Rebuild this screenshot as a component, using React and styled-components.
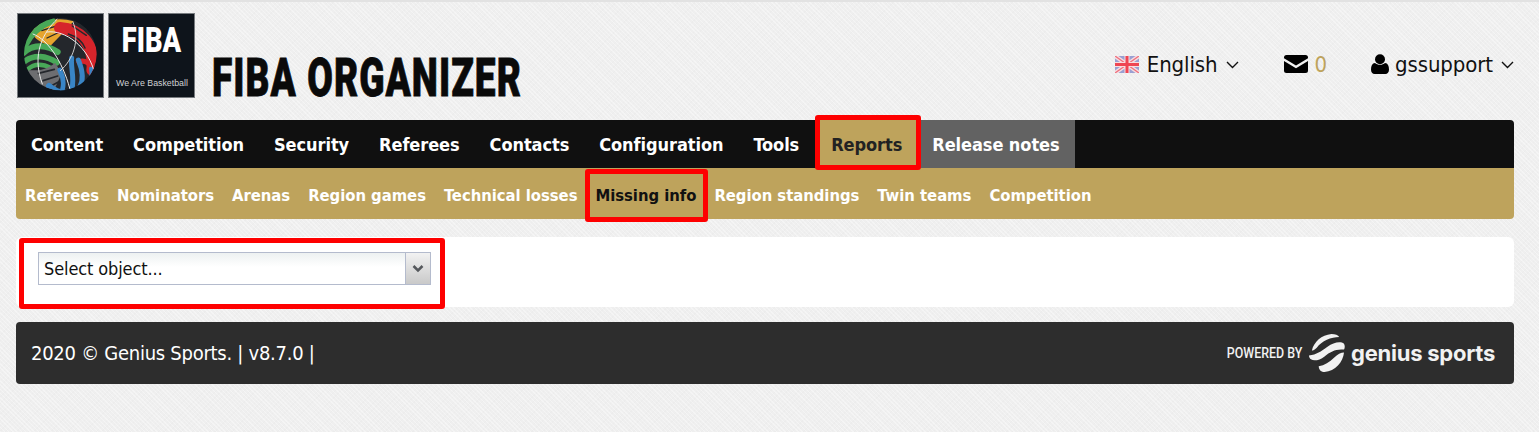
import React from "react";
import styled, { createGlobalStyle, css } from "styled-components";

const Global = createGlobalStyle`
  html, body { margin: 0; padding: 0; }
  body {
    height: 432px;
    overflow: hidden;
    background-color: #efefef;
    background-image:
      repeating-linear-gradient(45deg, rgba(255,255,255,.35) 0 1px, transparent 1px 3px),
      repeating-linear-gradient(-45deg, rgba(0,0,0,.012) 0 1px, transparent 1px 4px);
    font-family: "DejaVu Sans Condensed", "DejaVu Sans", sans-serif;
  }
`;

const redFrame = (top, right, bottom, left) => css`
  position: relative;
  &::after {
    content: "";
    position: absolute;
    z-index: 2;
    top: ${top}px;
    right: ${right}px;
    bottom: ${bottom}px;
    left: ${left}px;
    border: 5px solid #fe0000;
    border-radius: 3px;
    pointer-events: none;
  }
`;

const Page = styled.div`
  box-sizing: border-box;
  width: 1539px;
  height: 432px;
  padding: 0 25px 0 16px;
  border-top: 2px solid #e2e2e2;
`;

const Header = styled.header`
  height: 118px;
  display: flex;
  justify-content: space-between;
`;

const Brand = styled.div`
  display: flex;
  align-items: flex-start;
  padding: 11px 0 0 1px;
`;

const Tile = styled.svg`
  display: block;
  width: 87px;
  height: 85px;
  margin-right: 4px;
`;

const Title = styled.h1`
  margin: 43px 0 0 13px;
  font-family: "Roboto", "Liberation Sans", sans-serif;
  font-weight: 900;
  font-size: 53px;
  line-height: 44px;
  color: #0a0a0a;
  -webkit-text-stroke: 0.8px #0a0a0a;
  transform: scaleX(0.7);
  transform-origin: left center;
  white-space: nowrap;
  letter-spacing: 1.500px;
`;

const UserBar = styled.div`
  display: flex;
  align-items: center;
  height: 124px;
  color: #111;
  font-size: 22px;
  letter-spacing: -0.1px;
`;

const UserItem = styled.div`
  display: flex;
  align-items: center;
  margin-left: ${(p) => p.$gap}px;
`;

const Count = styled.span`
  color: #bea35c;
  margin-left: 7px;
`;

const Caret = styled.svg`
  width: 13px;
  height: 8px;
  margin-left: 8px;
  margin-top: 2px;
`;

const Nav = styled.nav`
  display: flex;
  height: 48px;
  background: #101010;
  border-radius: 4px 4px 0 0;
`;

const NavItem = styled.a`
  display: flex;
  align-items: center;
  height: 100%;
  padding: 0 ${(p) => p.$trail ?? 15}px 0 15px;
  font-size: 18px;
  font-weight: 700;
  letter-spacing: -0.07px;
  color: ${(p) => (p.$active ? "#222" : "#fff")};
  background: ${(p) => (p.$active ? "#bea35c" : p.$muted ? "#626262" : "transparent")};
  ${(p) => p.$active && redFrame(-5, -4, -2, -1)}
`;

const SubNav = styled.nav`
  display: flex;
  align-items: stretch;
  height: 51px;
  background: #bea35c;
  border-radius: 0 0 4px 4px;
`;

const SubItem = styled.a`
  display: flex;
  align-items: center;
  padding: 3px 9px 0;
  font-size: 16.500px;
  font-weight: 700;
  letter-spacing: -0.03px;
  color: ${(p) => (p.$active ? "#111" : "#fff")};
  ${(p) => p.$active && redFrame(1, -3, -3, -1)}
`;

const Panel = styled.section`
  margin-top: 18px;
  height: 70px;
  box-sizing: border-box;
  background: #fff;
  border-radius: 6px;
  padding: 15px 0 0 22px;
`;

const Annotated = styled.div`
  width: 393px;
  height: 33px;
  ${redFrame(-14, -14, -24, -19)}
`;

const SelectBox = styled.div`
  box-sizing: border-box;
  width: 393px;
  height: 33px;
  display: flex;
  border: 1px solid #b4bbcd;
  background: linear-gradient(#edf1f1, #fff 45%);
`;

const SelectText = styled.span`
  flex: 1;
  padding-left: 5px;
  font-size: 18px;
  letter-spacing: -0.12px;
  line-height: 32px;
  color: #111;
`;

const SelectButton = styled.span`
  width: 24px;
  display: flex;
  align-items: center;
  justify-content: center;
  border-left: 1px solid #b4bbcd;
  background: linear-gradient(#f2f2f2, #c9c9c9);
`;

const Footer = styled.footer`
  margin-top: 15px;
  height: 62px;
  display: flex;
  align-items: center;
  justify-content: space-between;
  padding: 0 19px 0 15px;
  background: #2d2d2d;
  border-radius: 4px;
  color: #fff;
  font-size: 20px;
  letter-spacing: -0.27px;
`;

const Powered = styled.div`
  display: flex;
  align-items: center;
  letter-spacing: 0;
`;

const PoweredBy = styled.span`
  font-family: "Roboto", sans-serif;
  font-size: 15.500px;
  font-weight: 500;
  color: #f2f2f2;
  transform: scaleX(0.8);
  transform-origin: right center;
  white-space: nowrap;
`;

const GeniusWord = styled.span`
  font-family: "Inter", sans-serif;
  font-size: 22px;
  font-weight: 700;
  color: #f2f2f2;
  letter-spacing: -0.25px;
  margin-left: 6px;
  white-space: nowrap;
`;

const Ball = () => (
  <Tile viewBox="6 9 261 255">
    <rect x="7.500" y="10.500" width="258" height="252" fill="#0e141b" stroke="#777b7f" strokeWidth="3" />
    <clipPath id="ballclip"><circle cx="136" cy="132" r="109" /></clipPath>
    <g clipPath="url(#ballclip)" fill="none" strokeLinecap="round">
      <circle cx="136" cy="132" r="109" fill="#24272c" />
      <path d="M48 66C72 34 125 18 176 34L150 62 106 108C80 100 58 86 48 66Z" fill="#e6a42e" />
      <path d="M80 62L130 46M96 84L134 66" stroke="#24272c" strokeWidth="4" />
      <path d="M135 54C194 58 240 100 232 180" stroke="#d6242b" strokeWidth="36" />
      <path d="M160 72C186 80 202 94 210 114M172 48L214 76" stroke="#24272c" strokeWidth="4.500" />
      <path d="M192 156C210 148 226 160 234 178" stroke="#d6242b" strokeWidth="16" />
      <path d="M30 104C46 72 74 46 110 32" stroke="#48a858" strokeWidth="22" />
      <path d="M24 130C56 98 100 106 128 126" stroke="#48a858" strokeWidth="18" />
      <path d="M24 158C56 130 96 138 126 158" stroke="#48a858" strokeWidth="17" />
      <path d="M38 178C58 160 84 162 108 174" stroke="#48a858" strokeWidth="13" />
      <path d="M32 180C56 182 92 184 120 158L140 190 114 248C78 236 46 212 32 180Z" fill="#6d6e71" />
      <path d="M70 190L118 178M84 212L128 198M104 230L130 216" stroke="#24272c" strokeWidth="5" />
      <path d="M102 228C130 254 176 256 210 236" stroke="#3985c6" strokeWidth="18" />
      <path d="M142 240C148 218 144 198 134 180" stroke="#3985c6" strokeWidth="14" />
      <path d="M170 240C180 206 166 172 170 144" stroke="#3985c6" strokeWidth="15" />
      <path d="M194 232C210 204 200 174 190 150" stroke="#3985c6" strokeWidth="15" />
      <path d="M218 218C228 206 232 192 228 176" stroke="#3985c6" strokeWidth="12" />
      <path d="M126 28C86 66 48 130 82 222" stroke="#ececec" strokeWidth="3" />
      <path d="M54 72C104 90 150 170 168 250" stroke="#ececec" strokeWidth="3" />
      <path d="M96 66C150 58 222 110 240 194" stroke="#ececec" strokeWidth="3" />
      <path d="M174 36C196 90 174 150 136 182" stroke="#ececec" strokeWidth="2.500" />
    </g>
  </Tile>
);

const FibaTile = () => (
  <Tile viewBox="0 0 87 85">
    <rect x=".5" y=".5" width="86" height="84" fill="#0e141b" stroke="#777b7f" />
    <text transform="translate(43.500 39) scale(.78 1)" textAnchor="middle" fontFamily="Roboto" fontWeight="900" fontSize="35" fill="#fff">FIBA</text>
    <text transform="translate(44 73) scale(.93 1)" textAnchor="middle" fontFamily="Liberation Sans" fontSize="9.500" fill="#d0d2d4">We Are Basketball</text>
  </Tile>
);

const CaretIcon = () => (
  <Caret viewBox="0 0 13 8"><path d="M1 1l5.500 5.500L12 1" fill="none" stroke="#111" strokeWidth="1.400" /></Caret>
);

const Flag = () => (
  <svg width="24" height="17" viewBox="0 0 24 17" style={{ marginRight: 8 }}>
    <rect width="24" height="17" fill="#9aa0d2" />
    <path d="M0 0L24 17M24 0L0 17" stroke="#f7dde0" strokeWidth="4" />
    <path d="M0 0L24 17M24 0L0 17" stroke="#ee6f7d" strokeWidth="1.300" />
    <path d="M12 0V17M0 8.500H24" stroke="#f7dde0" strokeWidth="5" />
    <path d="M12 0V17M0 8.500H24" stroke="#ef4552" strokeWidth="3" />
  </svg>
);

const Envelope = () => (
  <svg width="24" height="18" viewBox="0 0 24 18">
    <path d="M2.500 0h19A2.500 2.500 0 0 1 24 2.500v.8L12 10.600 0 3.300v-.8A2.500 2.500 0 0 1 2.500 0Z" fill="#000" />
    <path d="M0 6l12 7.200L24 6v9.500a2.500 2.500 0 0 1-2.500 2.500h-19A2.500 2.500 0 0 1 0 15.500Z" fill="#000" />
  </svg>
);

const UserIcon = () => (
  <svg width="18" height="20" viewBox="0 0 18 20" style={{ marginRight: 6 }}>
    <circle cx="9" cy="5.200" r="5" fill="#000" />
    <path d="M4 9c1.300 1.200 3 1.800 5 1.800S12.700 10.200 14 9c2.800.3 4 2.600 4 6.500 0 2.800-1.500 4.500-3.600 4.500H3.600C1.500 20 0 18.300 0 15.500 0 11.600 1.200 9.300 4 9Z" fill="#000" />
  </svg>
);

const GeniusMark = () => (
  <svg width="37" height="39" viewBox="0 0 38 40" style={{ marginLeft: 6 }}>
    <path d="M4 17C6 8 14 1 24 0c4 0 7 1 8 3C24 3 14 7 9 14c-2 2-4 3-5 3Z" fill="#f2f2f2" />
    <path d="M1 22c8-1 12-4 19-9 6-4 13-6 17-3 1 2 1 4 0 6-8-1-14 2-20 7-5 4-11 5-14 3-1-1-2-2-2-4Z" fill="#f2f2f2" />
    <path d="M11 33c6-1 11-4 16-9 3-3 7-5 10-5-1 10-9 19-20 20-3 0-6-2-6-6Z" fill="#f2f2f2" />
  </svg>
);

const topItems = ["Content", "Competition", "Security", "Referees", "Contacts", "Configuration"];
const subItems = ["Referees", "Nominators", "Arenas", "Region games", "Technical losses"];
const subItemsAfter = ["Region standings", "Twin teams", "Competition"];

export default function App() {
  return (
    <Page>
      <Global />
      <Header>
        <Brand>
          <Ball />
          <FibaTile />
          <Title>FIBA ORGANIZER</Title>
        </Brand>
        <UserBar>
          <UserItem $gap={0}><Flag />English<CaretIcon /></UserItem>
          <UserItem $gap={45}><Envelope /><Count>0</Count></UserItem>
          <UserItem $gap={44}><UserIcon />gssupport<CaretIcon /></UserItem>
        </UserBar>
      </Header>
      <Nav>
        {topItems.map((t) => <NavItem key={t}>{t}</NavItem>)}
        <NavItem $trail={17}>Tools</NavItem>
        <NavItem $active>Reports</NavItem>
        <NavItem $muted>Release notes</NavItem>
      </Nav>
      <SubNav>
        {subItems.map((t) => <SubItem key={t}>{t}</SubItem>)}
        <SubItem $active>Missing info</SubItem>
        {subItemsAfter.map((t) => <SubItem key={t}>{t}</SubItem>)}
      </SubNav>
      <Panel>
        <Annotated>
          <SelectBox>
            <SelectText>Select object...</SelectText>
            <SelectButton>
              <svg width="12" height="8" viewBox="0 0 12 8"><path d="M1.500 1L6 5.500 10.500 1" fill="none" stroke="#55585c" strokeWidth="2.500" /></svg>
            </SelectButton>
          </SelectBox>
        </Annotated>
      </Panel>
      <Footer>
        <span>2020 © Genius Sports. | v8.7.0 |</span>
        <Powered>
          <PoweredBy>POWERED BY</PoweredBy>
          <GeniusMark />
          <GeniusWord>genius sports</GeniusWord>
        </Powered>
      </Footer>
    </Page>
  );
}
